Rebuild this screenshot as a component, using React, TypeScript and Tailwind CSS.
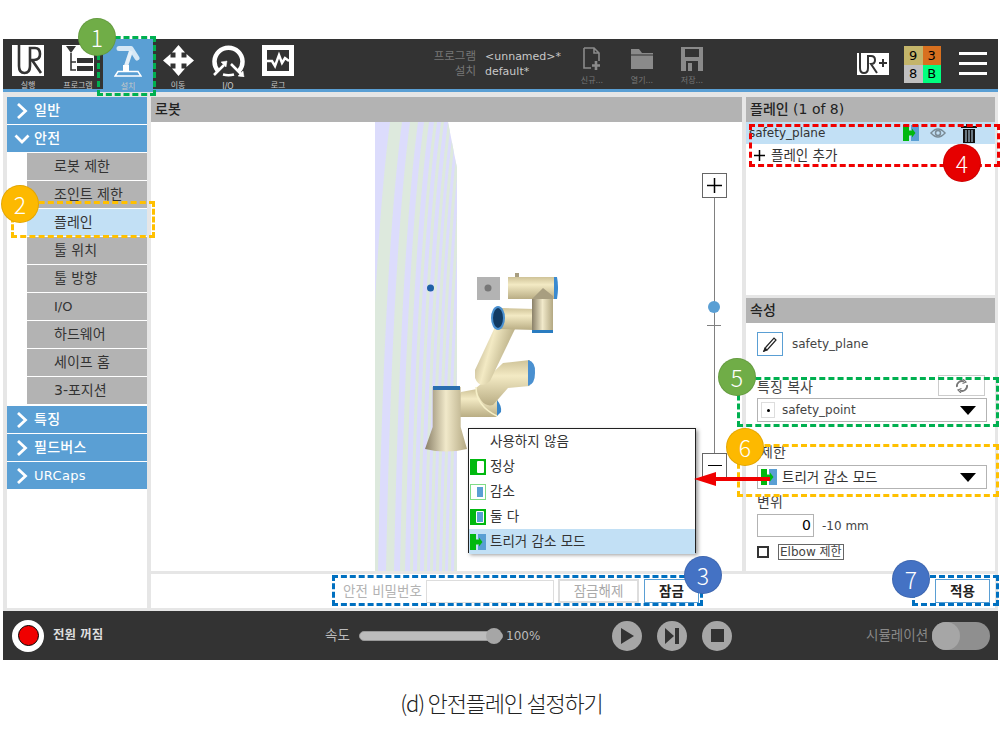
import React from 'react';

const Chevron = ({ open }: { open?: boolean }) => (
  <svg width="16" height="16" viewBox="0 0 16 16" fill="none" stroke="white" strokeWidth="2.800">
    {open ? <path d="M1.500 4.500 L8 11 L14.500 4.500" /> : <path d="M4 1 L11.500 8 L4 15" />}
  </svg>
);

const SideHead = ({ label, open }: { label: React.ReactNode; open?: boolean }) => (
  <div className="h-[27px] mb-[1px] bg-[#5a9fd4] flex items-center pl-[7px] text-white text-[14px] font-medium gap-[4px]">
    <div className="w-[16px] flex justify-center"><Chevron open={open} /></div>
    <span className="tracking-[0.3px]">{label}</span>
  </div>
);

const SideSub = ({ label, active }: { label: React.ReactNode; active?: boolean }) => (
  <div className={`h-[27px] mb-[1px] ml-[20px] flex items-center pl-[27px] text-[14px] text-[#333] ${active ? 'bg-[#c2e0f5]' : 'bg-[#b3b3b3]'}`}>
    {label}
  </div>
);

const NavItem = ({ label, active, children }: { label: string; active?: boolean; children: React.ReactNode }) => (
  <div className={`w-[50px] h-[50px] flex flex-col items-center pt-[6px] ${active ? 'bg-[#5a9fd4]' : ''}`}>
    <div className="h-[32px] flex items-center justify-center">{children}</div>
    <span className="text-[8px] leading-[10px] mt-[5px] text-[#c8c8c8]">{label}</span>
  </div>
);

const UrLogo = () => (
  <svg width="32" height="31" viewBox="0 0 32 31">
    <rect width="32" height="31" fill="white" />
    <path d="M7 0 V21 Q7 28 12.500 28 Q18 28 18 21 V3 H23 Q28 3 28 9 Q28 15 22 15 H20 L29 28" fill="none" stroke="#333" strokeWidth="2.600" />
  </svg>
);

const ProgramIcon = () => (
  <svg width="32" height="31" viewBox="0 0 32 31">
    <path d="M0 0 H26 L32 6 V31 H0 Z" fill="white" />
    <path d="M4 1 H14 L9 8 Z" fill="#333" />
    <path d="M9 8 V25 H14 M9 17 H14" stroke="#333" strokeWidth="1.600" fill="none" />
    <rect x="15" y="13" width="16" height="5" fill="#333" />
    <rect x="15" y="21" width="16" height="5" fill="#333" />
  </svg>
);

const InstallIcon = () => (
  <svg width="28" height="32" viewBox="0 0 28 32">
    <path d="M5 3.500 L17 3.500 L23 13" fill="none" stroke="#d6e8f5" strokeWidth="5" strokeLinejoin="round" strokeLinecap="round" />
    <path d="M17 6 L12 21" stroke="#e5f0f8" strokeWidth="4" />
    <rect x="9" y="20" width="6" height="6" fill="white" />
    <path d="M4 26.500 H24 L27 31 H1 Z" fill="none" stroke="white" strokeWidth="1.500" />
  </svg>
);

const MoveIcon = () => (
  <svg width="31" height="31" viewBox="0 0 31 31" fill="white">
    <path d="M15.500 0 L22 7.500 H18.500 V12.500 H23.500 V9 L31 15.500 L23.500 22 V18.500 H18.500 V23.500 H22 L15.500 31 L9 23.500 H12.500 V18.500 H7.500 V22 L0 15.500 L7.500 9 V12.500 H12.500 V7.500 H9 Z" />
  </svg>
);

const IoIcon = () => (
  <svg width="33" height="32" viewBox="0 0 33 32" fill="none" stroke="white">
    <path d="M6 26 A14 14 0 1 1 27 26" strokeWidth="4.500" />
    <path d="M11 29.500 Q16.500 31 22 29.500" strokeWidth="2.500" />
    <path d="M2 30 L12 20 M19 19 L29 29" strokeWidth="2.600" />
    <path d="M9 17 L15 16 L14 22 Z M26 31 L32 32 L31 26 Z" fill="white" strokeWidth="0.500" />
  </svg>
);

const LogIcon = () => (
  <svg width="32" height="31" viewBox="0 0 32 31">
    <rect width="32" height="31" fill="white" />
    <rect x="5" y="5" width="22" height="21" fill="#333" />
    <path d="M5 16 H10 L13 21 L17 10 L20 18 L23 13 L27 16" fill="none" stroke="white" strokeWidth="2.500" />
  </svg>
);

const FileAction = ({ label, children }: { label: string; children: React.ReactNode }) => (
  <div className="w-[50px] flex flex-col items-center">
    <div className="h-[26px] flex items-center">{children}</div>
    <span className="text-[8px] leading-[10px] mt-[4px] text-[#777]">{label}</span>
  </div>
);

const TriggerIcon = () => (
  <svg width="16" height="16" viewBox="0 0 16 16" className="shrink-0">
    <path d="M8 0 H16 V16 H8 V11 L11 8 L8 5 Z" fill="#5a9fd4" />
    <path d="M0 0 H6 V5.500 H9 V3.500 L12.500 8 L9 12.500 V10.500 H6 V16 H0 Z" fill="#00b80f" />
  </svg>
);

const Caret = () => (
  <svg width="16" height="9" viewBox="0 0 16 9"><path d="M0 0 H16 L8 9 Z" fill="black" /></svg>
);

const MenuRow = ({ label, active, children }: { label: string; active?: boolean; children?: React.ReactNode }) => (
  <div className={`h-[25px] flex items-center pl-[1px] text-[13.500px] text-[#333] ${active ? 'bg-[#c2e0f5]' : ''}`}>
    <div className="w-[16px] h-[16px] mr-[4px] shrink-0">{children}</div>
    <span>{label}</span>
  </div>
);

const CircleBtn = ({ children }: { children: React.ReactNode }) => (
  <div className="w-[30px] h-[30px] rounded-full bg-[#a6a6a6] flex items-center justify-center">{children}</div>
);

const Badge = ({ n, c }: { n: number; c: string }) => (
  <div className={`absolute w-[38px] h-[38px] rounded-full flex items-center justify-center text-white text-[23px] font-light border border-black/10 font-['Noto_Sans_CJK_KR',sans-serif] ${c}`}>{n}</div>
);

// plane stripes, top x at y=122; they lean left going down and tighten to the right
const stripeTops = [375, 390, 402, 410, 418, 424, 429, 434, 437, 441, 444, 448, 451, 454, 457, 460, 463, 466, 469, 472, 475, 478, 481, 484];

const RobotScene = () => (
  <svg width="591" height="449" viewBox="151 122 591 449" className="absolute left-0 top-0">
    <defs>
      <linearGradient id="cylH" x1="0" y1="0" x2="1" y2="0">
        <stop offset="0" stopColor="#8a8068" />
        <stop offset="0.5" stopColor="#f1e9ca" />
        <stop offset="1" stopColor="#b3a882" />
      </linearGradient>
      <linearGradient id="cylV" x1="0" y1="0" x2="0" y2="1">
        <stop offset="0" stopColor="#cfc398" />
        <stop offset="0.35" stopColor="#f3eac4" />
        <stop offset="1" stopColor="#b9ad84" />
      </linearGradient>
      <linearGradient id="cylD" x1="0" y1="0" x2="1" y2="0.400">
        <stop offset="0" stopColor="#a89c78" />
        <stop offset="0.45" stopColor="#f3eac4" />
        <stop offset="1" stopColor="#ada279" />
      </linearGradient>
      <clipPath id="planeClip"><path d="M375 122 H448 L457 168 V571 H375 Z" /></clipPath>
    </defs>
    <g clipPath="url(#planeClip)">
      <rect x="375" y="122" width="90" height="449" fill="#dcdcfc" />
      {stripeTops.map((x, i) =>
        i % 2 === 1 && i + 1 < stripeTops.length ? (
          <path key={x} d={`M${x} 122 H${stripeTops[i + 1]} Q${stripeTops[i + 1] - 18} 260 ${stripeTops[i + 1] - 24} 571 H${x - 24} Q${x - 18} 260 ${x} 122 Z`} fill="#dde9dd" />
        ) : null
      )}
    </g>
    <circle cx="430.500" cy="288" r="3.500" fill="#1f5fa8" />

    <rect x="477" y="277" width="23" height="23" fill="#b3b3b3" />
    <circle cx="488" cy="288" r="3.500" fill="#777" />

    <path d="M455 403 L461 392 L477 389 L498 400 V415 L496 417 L459 417 Z" fill="url(#cylV)" />
    <path d="M497 400 Q502 406 501 412 L497 416 Z" fill="#3a86c8" />
    <path d="M432.700 387 H460.700 V427 L467 449 Q446 454 425 449 L432.700 427 Z" fill="url(#cylH)" />
    <rect x="433" y="386" width="27" height="4" fill="#2a6fb0" />

    <path d="M476 388 L482 383 L503 363 L530 360 V386 L508 388 L493 405 Q481 408 476 388 Z" fill="url(#cylV)" />
    <path d="M476 387 Q476 406 497 416" fill="none" stroke="#f6f0c8" strokeWidth="1.500" />
    <path d="M528 360 Q536 362 535 373 Q535 384 528 386 Z" fill="#4a90d0" />
    <path d="M475 370 L495 327 L515 329 L490 381 Q480 390 475 378 Z" fill="url(#cylD)" />

    <path d="M500 308 L535 309 L548 316 L546 325 L535 330 L500 329 Z" fill="url(#cylV)" />
    <ellipse cx="498" cy="318" rx="6" ry="11" fill="#123a62" stroke="#4a90d0" strokeWidth="2" />
    <path d="M532 297 L543 288 L553 295 V332 H532 Z" fill="url(#cylH)" />
    <rect x="532" y="330" width="21" height="3" fill="#2a7cc0" />

    <rect x="508" y="277" width="49" height="22" fill="url(#cylV)" />
    <path d="M532 299 L543 288 L553 296 V299 Z" fill="#a89e80" />
    <path d="M554 277 H557 Q559 287 557 299 H554 Z" fill="#3a8ad0" />
    <rect x="515" y="273" width="4" height="4" fill="#a89e80" />
  </svg>
);

export default function App() {
  return (
    <div className="relative w-[1000px] h-[730px] bg-white overflow-hidden pt-[39px] pl-[3px] font-['DejaVu_Sans','Noto_Sans_CJK_KR',sans-serif]">
      <div className="w-[995px] flex flex-col">
        {/* Top bar */}
        <div className="h-[53px] bg-[#333333] border-b-[3px] border-[#5a9fd4] flex items-start">
          <NavItem label="실행"><UrLogo /></NavItem>
          <NavItem label="프로그램"><ProgramIcon /></NavItem>
          <NavItem label="설치" active><InstallIcon /></NavItem>
          <NavItem label="이동"><MoveIcon /></NavItem>
          <NavItem label="I/O"><IoIcon /></NavItem>
          <NavItem label="로그"><LogIcon /></NavItem>

          <div className="ml-[130px] mt-[10px] w-[132px] grid grid-cols-[43px_1fr] gap-x-[9px] text-[11.500px] leading-[15px]">
            <span className="text-right text-[#777] whitespace-nowrap">프로그램</span>
            <span className="text-[#c8c8c8] text-[11px]">&lt;unnamed&gt;*</span>
            <span className="text-right text-[#777]">설치</span>
            <span className="text-[#c8c8c8] text-[11px]">default*</span>
          </div>

          <div className="flex ml-[2px] mt-[7px]">
            <FileAction label="신규...">
              <svg width="18" height="24" viewBox="0 0 18 24" fill="none" stroke="#8a8a8a" strokeWidth="1.600">
                <path d="M1 1 H11 L16 6 V14 M11 1 V6 H16 M1 1 V21 H8" />
                <path d="M13 14 V23 M9 18.500 H17" strokeWidth="2.600" />
              </svg>
            </FileAction>
            <FileAction label="열기...">
              <svg width="22" height="20" viewBox="0 0 22 20" fill="#8a8a8a">
                <path d="M0 0 H8 L11 4 H22 V20 H0 Z" />
                <path d="M0 6 H22" stroke="#333" strokeWidth="1" />
              </svg>
            </FileAction>
            <FileAction label="저장...">
              <svg width="22" height="24" viewBox="0 0 22 24" fill="#8a8a8a">
                <path d="M0 0 H22 V24 H0 Z" />
                <rect x="4" y="2" width="14" height="8" fill="#333" />
                <rect x="5" y="14" width="12" height="10" fill="#333" />
                <rect x="7" y="16" width="4" height="8" fill="#8a8a8a" />
              </svg>
            </FileAction>
          </div>

          <div className="ml-[140px] mt-[14px]">
            <svg width="32" height="22" viewBox="0 0 32 22">
              <rect width="32" height="22" fill="white" />
              <path d="M3 0 V15 Q3 20 7 20 Q11 20 11 15 V3 H14 Q18 3 18 7 Q18 11 14 11 L20 20" fill="none" stroke="#333" strokeWidth="2" />
              <path d="M22 10 H30 M26 6 V14" stroke="#333" strokeWidth="2" />
            </svg>
          </div>
          <div className="ml-[15px] mt-[7px] w-[37px] h-[37px] grid grid-cols-2 grid-rows-2 text-[13px] text-black">
            <div className="bg-[#c4b56a] flex items-center justify-center">9</div>
            <div className="bg-[#d8701f] flex items-center justify-center">3</div>
            <div className="bg-[#c0c0c0] flex items-center justify-center">8</div>
            <div className="bg-[#00ff7f] flex items-center justify-center">B</div>
          </div>
          <div className="ml-[18px] mt-[13px] w-[28px] flex flex-col gap-[7px]">
            <div className="h-[3px] bg-white" />
            <div className="h-[3px] bg-white" />
            <div className="h-[3px] bg-white" />
          </div>
        </div>

        {/* Body */}
        <div className="h-[519px] bg-[#e6e6e6] flex pl-[4px] pr-[3px] pt-[5px] pb-[3px] gap-[4px]">
          <div className="w-[140px] bg-white">
            <SideHead label="일반" />
            <SideHead label="안전" open />
            <SideSub label="로봇 제한" />
            <SideSub label="조인트 제한" />
            <SideSub label="플레인" active />
            <SideSub label="툴 위치" />
            <SideSub label="툴 방향" />
            <SideSub label={<span className="text-[13px]">I/O</span>} />
            <SideSub label="하드웨어" />
            <SideSub label="세이프 홈" />
            <SideSub label="3-포지션" />
            <div className="h-[1px]" />
            <SideHead label="특징" />
            <SideHead label="필드버스" />
            <SideHead label={<span className="text-[13px]">URCaps</span>} />
          </div>

          <div className="w-[844px] flex flex-col">
            <div className="h-[474px] flex gap-[4px]">
              {/* Robot view */}
              <div className="w-[591px] flex flex-col">
                <div className="h-[25px] bg-[#b3b3b3] flex items-center pl-[4px] text-[14px] font-medium text-[#222]">로봇</div>
                <div className="relative h-[449px] bg-white">
                  <RobotScene />
                  <div className="absolute left-[562.500px] top-[70px] w-[1.500px] h-[270px] bg-[#808080]" />
                  <div className="absolute left-[551px] top-[51px] w-[25px] h-[25px] bg-white border border-[#666] flex items-center justify-center">
                    <svg width="15" height="15" viewBox="0 0 15 15"><path d="M7.500 0 V15 M0 7.500 H15" stroke="black" strokeWidth="1.500" /></svg>
                  </div>
                  <div className="absolute left-[557px] top-[179px] w-[12px] h-[12px] rounded-full bg-[#5a9fd4]" />
                  <div className="absolute left-[556px] top-[203px] w-[14px] h-[1px] bg-[#808080]" />
                  <div className="absolute left-[551px] top-[331px] w-[25px] h-[25px] bg-white border border-[#666] flex items-center justify-center">
                    <div className="w-[14px] h-[1.500px] bg-black" />
                  </div>
                  {/* Limit mode dropdown */}
                  <div className="absolute left-[317px] top-[306px] w-[228px] h-[125px] bg-white border border-[#222] shadow-[2px_2px_4px_rgba(0,0,0,0.4)]">
                    <MenuRow label="사용하지 않음" />
                    <MenuRow label="정상">
                      <svg width="16" height="16" viewBox="0 0 16 16"><rect width="16" height="16" fill="#00b80f" /><rect x="7" y="2" width="7" height="12" rx="1" fill="white" /></svg>
                    </MenuRow>
                    <MenuRow label="감소">
                      <svg width="16" height="16" viewBox="0 0 16 16"><rect x="0.500" y="0.500" width="15" height="15" fill="none" stroke="#00b80f" strokeDasharray="1 1" /><rect x="7" y="3" width="6" height="10" fill="#5a9fd4" /></svg>
                    </MenuRow>
                    <MenuRow label="둘 다">
                      <svg width="16" height="16" viewBox="0 0 16 16"><rect width="16" height="16" fill="#00b80f" /><rect x="6" y="2" width="8" height="12" rx="1" fill="white" /><rect x="7" y="3" width="6" height="10" fill="#5a9fd4" /></svg>
                    </MenuRow>
                    <MenuRow label="트리거 감소 모드" active><TriggerIcon /></MenuRow>
                  </div>
                </div>
              </div>

              {/* Right panels */}
              <div className="w-[249px] flex flex-col gap-[3px]">
                <div className="h-[198px] bg-white">
                  <div className="h-[25px] bg-[#b3b3b3] flex items-center pl-[4px] text-[14px] font-medium text-[#222]">플레인 (1 of 8)</div>
                  <div className="h-[22px] bg-[#c2e0f5] flex items-center pl-[3px] text-[12px] text-[#333]">
                    <span className="w-[154px]">safety_plane</span>
                    <TriggerIcon />
                    <svg width="16" height="12" viewBox="0 0 16 12" className="ml-[11px]" fill="none" stroke="#7a8a94" strokeWidth="1.500">
                      <path d="M1 6 Q8 -2 15 6 Q8 14 1 6 Z" />
                      <circle cx="8" cy="6" r="2.500" />
                    </svg>
                    <svg width="16" height="19" viewBox="0 0 16 19" className="ml-[15px]" fill="#111">
                      <rect x="0" y="2" width="16" height="2" />
                      <rect x="5" y="0" width="6" height="2" />
                      <path d="M2 5 H14 V19 H2 Z" />
                      <path d="M5 6 V18 M8 6 V18 M11 6 V18" stroke="#c2e0f5" strokeWidth="1" />
                    </svg>
                  </div>
                  <div className="h-[22px] flex items-center pl-[8px] text-[13.500px] text-[#333] gap-[6px]">
                    <svg width="11" height="11" viewBox="0 0 11 11"><path d="M5.500 0 V11 M0 5.500 H11" stroke="black" strokeWidth="1.500" /></svg>
                    <span>플레인 추가</span>
                  </div>
                </div>

                <div className="flex-1 bg-white">
                  <div className="h-[25px] bg-[#b3b3b3] flex items-center pl-[4px] text-[14px] font-medium text-[#222]">속성</div>
                  <div className="pl-[11px] text-[12px] text-[#444]">
                    <div className="mt-[9px] flex items-center gap-[9px] h-[24px]">
                      <div className="w-[26px] h-[24px] border border-[#5a9fd4] flex items-center justify-center">
                        <svg width="16" height="16" viewBox="0 0 16 16" fill="none" stroke="#222" strokeWidth="1.200">
                          <path d="M4 11 L12 2 L14 4 L6 13 L2 15 Z" />
                          <path d="M2 15 L3 12 L5 14 Z" fill="#222" />
                        </svg>
                      </div>
                      <span>safety_plane</span>
                    </div>
                    <div className="mt-[19px] w-[228px] h-[21px] flex items-center justify-between">
                      <span className="text-[14px] pt-[3px]">특징 복사</span>
                      <div className="w-[47px] h-[21px] border border-[#ccc] flex items-center justify-center">
                        <svg width="14" height="14" viewBox="0 0 14 14" fill="none" stroke="#777" strokeWidth="1.800">
                          <path d="M2 8 A5 5 0 0 1 9 2.500 M12 6 A5 5 0 0 1 5 11.500" />
                          <path d="M8 0 L11 3 L7.500 4.500 M6 14 L3 11 L6.500 9.500" strokeWidth="1.200" />
                        </svg>
                      </div>
                    </div>
                    <div className="mt-[2px] w-[230px] h-[24px] border border-[#b3b3b3] flex items-center pl-[3px] pr-[10px]">
                      <div className="w-[14px] h-[16px] border border-[#ddd] flex items-center justify-center mr-[7px]">
                        <div className="w-[3px] h-[3px] rounded-full bg-black" />
                      </div>
                      <span className="flex-1">safety_point</span>
                      <Caret />
                    </div>
                    <div className="mt-[22px] h-[17px] leading-[17px] pl-[3px] text-[14px]">제한</div>
                    <div className="mt-[4px] w-[230px] h-[24px] border border-[#b3b3b3] flex items-center pl-[3px] pr-[10px] text-[#333] text-[13.500px]">
                      <TriggerIcon />
                      <span className="flex-1 ml-[5px]">트리거 감소 모드</span>
                      <Caret />
                    </div>
                    <div className="mt-[4px] h-[18px] leading-[18px] text-[14px]">변위</div>
                    <div className="mt-[3px] flex items-center gap-[8px]">
                      <div className="w-[57px] h-[23px] border border-[#b3b3b3] text-right pr-[2px] leading-[21px] text-black text-[14px]">0</div>
                      <span>-10 mm</span>
                    </div>
                    <div className="mt-[7px] flex items-center gap-[9px]">
                      <div className="w-[12px] h-[12px] border-2 border-[#333]" />
                      <span className="border border-[#666] px-[1px] leading-[14px]">Elbow 제한</span>
                    </div>
                  </div>
                </div>
              </div>
            </div>

            {/* Password / apply strip */}
            <div className="mt-[3px] h-[34px] bg-white flex items-center text-[13.500px]">
              <span className="ml-[192px] w-[79px] text-[#b3b3b3] whitespace-nowrap">안전 비밀번호</span>
              <div className="ml-[4px] w-[128px] h-[23px] border border-[#ddd]" />
              <div className="ml-[4px] w-[81px] h-[24px] border-2 border-[#ddd] flex items-center justify-center text-[#aaa]">잠금해제</div>
              <div className="ml-[5px] w-[55px] h-[24px] border border-[#5a9fd4] flex items-center justify-center font-bold text-[#222]">잠금</div>
              <div className="ml-[236px] w-[55px] h-[24px] border border-[#5a9fd4] flex items-center justify-center font-bold text-[#222]">적용</div>
            </div>
          </div>
        </div>

        {/* Bottom bar */}
        <div className="h-[49px] bg-[#333333] flex items-center text-[12px]">
          <div className="ml-[9px] w-[32px] h-[32px] rounded-full bg-white flex items-center justify-center">
            <div className="w-[21px] h-[21px] rounded-full bg-[#f00000] border border-black" />
          </div>
          <span className="ml-[9px] w-[50px] text-[#ddd] text-[12.500px] font-bold whitespace-nowrap">전원 꺼짐</span>
          <span className="ml-[222px] w-[25px] text-[#bbb] text-[13.500px] whitespace-nowrap">속도</span>
          <div className="relative ml-[9px] w-[144px] h-[10px] rounded-full bg-[#bcbcbc] border border-[#999]">
            <div className="absolute right-0 top-[-4px] w-[16px] h-[16px] rounded-full bg-[#a6a6a6]" />
          </div>
          <span className="ml-[3px] w-[36px] text-[#bbb]">100%</span>
          <div className="ml-[70px] flex gap-[15px]">
            <CircleBtn><svg width="14" height="16" viewBox="0 0 14 16"><path d="M1 0 L14 8 L1 16 Z" fill="#333" /></svg></CircleBtn>
            <CircleBtn><svg width="14" height="16" viewBox="0 0 14 16"><path d="M0 0 L9 8 L0 16 Z M10 0 H14 V16 H10 Z" fill="#333" /></svg></CircleBtn>
            <CircleBtn><div className="w-[13px] h-[13px] bg-[#333]" /></CircleBtn>
          </div>
          <span className="ml-[134px] w-[66px] text-[#888] text-[13.500px] whitespace-nowrap">시뮬레이션</span>
          <div className="w-[58px] h-[28px] rounded-full bg-[#8f8f8f] flex">
            <div className="w-[28px] h-[28px] rounded-full bg-[#a6a6a6]" />
          </div>
        </div>
      </div>

      {/* Caption */}
      <div className="mt-[27px] text-center text-[22px] leading-[30px] tracking-[-1.200px] font-light text-[#222] font-['Noto_Sans_CJK_KR',sans-serif]">(d) 안전플레인 설정하기</div>

      {/* Callout overlays */}
      <div className="absolute left-[97px] top-[36px] w-[59px] h-[60px] border-[3px] border-dashed border-[#00b050]" />
      <div className="absolute left-[11px] top-[201px] w-[144px] h-[37px] border-[3px] border-dashed border-[#ffc000]" />
      <div className="absolute left-[332px] top-[575px] w-[371px] h-[31px] border-[3px] border-dashed border-[#0070c0]" />
      <div className="absolute left-[749px] top-[124px] w-[251px] h-[43px] border-[3px] border-dashed border-[#f00000]" />
      <div className="absolute left-[737px] top-[377px] w-[262px] h-[50px] border-[3px] border-dashed border-[#00b050]" />
      <div className="absolute left-[737px] top-[444px] w-[262px] h-[53px] border-[3px] border-dashed border-[#ffc000]" />
      <div className="absolute left-[912px] top-[575px] w-[87px] h-[31px] border-[3px] border-dashed border-[#0070c0]" />
      <svg width="80" height="16" viewBox="0 0 80 16" className="absolute left-[694px] top-[471px]">
        <path d="M0 8 L22 1 V6 H76 V10 H22 V15 Z" fill="#f00000" />
      </svg>
      <Badge n={1} c="left-[78px] top-[18px] bg-[#70ad47]" />
      <Badge n={2} c="left-[1px] top-[185px] bg-[#fdb900]" />
      <Badge n={3} c="left-[684px] top-[556px] bg-[#4472c4]" />
      <Badge n={4} c="left-[943px] top-[144px] bg-[#e60000]" />
      <Badge n={5} c="left-[718px] top-[358px] bg-[#70ad47]" />
      <Badge n={6} c="left-[726px] top-[428px] bg-[#fdb900]" />
      <Badge n={7} c="left-[892px] top-[560px] bg-[#4472c4]" />
    </div>
  );
}
